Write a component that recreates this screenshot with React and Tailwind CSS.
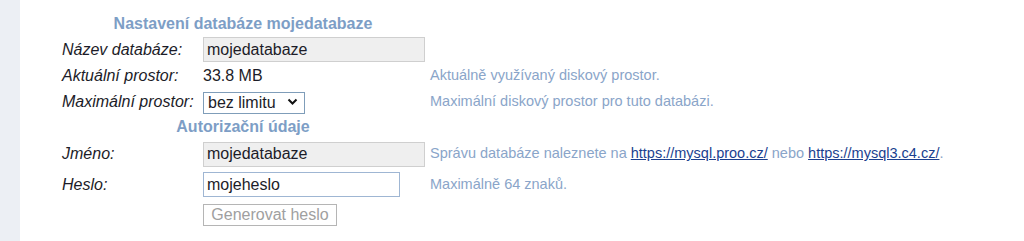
import { useState } from 'react';

function Desc({ children }) {
  return <div className="text-[14.5px] text-[#8aa5c9] whitespace-nowrap">{children}</div>;
}

export default function App() {
  const [heslo, setHeslo] = useState('mojeheslo');
  const [limit, setLimit] = useState('bez');

  return (
    <div
      className="flex w-[1024px] h-[241px] bg-white text-[#1c1c28] overflow-hidden"
      style={{ fontFamily: '"Liberation Sans", Arial, sans-serif' }}
    >
      <div className="w-[20px] shrink-0 bg-[#eceff4]" />
      <div className="pl-[42px] pt-[12px]">
        <div className="grid grid-cols-[141px_227px_1fr] items-center">
          {/* nastaveni */}
          <div className="col-span-2 h-[24px] pr-[6px] flex items-center justify-center font-bold text-[16px] text-[#7d9ec6]">
            Nastavení databáze mojedatabaze
          </div>
          <div />

          <div className="h-[27px] italic text-[16px] flex items-center">Název databáze:</div>
          <div className="h-[27px] flex items-center">
            <input
              readOnly
              value="mojedatabaze"
              className="w-[222px] h-[25px] px-[3px] bg-[#efefef] border border-[#cfcfcf] text-[16px] outline-none"
            />
          </div>
          <div />

          <div className="h-[26px] italic text-[16px] flex items-center">Aktuální prostor:</div>
          <div className="h-[26px] flex items-center text-[16px]">33.8 MB</div>
          <Desc>Aktuálně využívaný diskový prostor.</Desc>

          <div className="h-[26px] italic text-[16px] flex items-center">Maximální prostor:</div>
          <div className="h-[26px] flex items-center">
            <div className="relative w-[102px] h-[22px]">
              <select
                value={limit}
                onChange={(e) => setLimit(e.target.value)}
                className="appearance-none w-full h-full pl-[4px] bg-white border border-[#7f9db9] text-[16px] leading-none outline-none"
              >
                <option value="bez">bez limitu</option>
                <option value="100">100 MB</option>
              </select>
              <svg
                className="absolute right-[7px] top-[7px] pointer-events-none"
                width="11"
                height="8"
                viewBox="0 0 11 8"
              >
                <path d="M1.5 1.5 L5.5 5.5 L9.5 1.5" fill="none" stroke="#111" strokeWidth="2" />
              </svg>
            </div>
          </div>
          <Desc>Maximální diskový prostor pro tuto databázi.</Desc>

          {/* autorizace */}
          <div className="col-span-2 h-[24px] pr-[6px] flex items-center justify-center font-bold text-[16px] text-[#7d9ec6]">
            Autorizační údaje
          </div>
          <div />

          <div className="h-[30px] italic text-[16px] flex items-center">Jméno:</div>
          <div className="h-[30px] flex items-center">
            <input
              readOnly
              value="mojedatabaze"
              className="w-[222px] h-[25px] px-[3px] bg-[#efefef] border border-[#cfcfcf] text-[16px] outline-none"
            />
          </div>
          <Desc>
            Správu databáze naleznete na{' '}
            <a href="#" className="underline text-[#1b3f8f]">https://mysql.proo.cz/</a> nebo{' '}
            <a href="#" className="underline text-[#1b3f8f]">https://mysql3.c4.cz/</a>.
          </Desc>

          <div className="h-[31px] italic text-[16px] flex items-center">Heslo:</div>
          <div className="h-[31px] flex items-center">
            <input
              value={heslo}
              onChange={(e) => setHeslo(e.target.value)}
              className="w-[197px] h-[25px] px-[3px] bg-white border border-[#9fb6d3] text-[16px] outline-none"
            />
          </div>
          <Desc>Maximálně 64 znaků.</Desc>

          <div />
          <div className="h-[30px] flex items-center">
            <button
              disabled
              className="w-[134px] h-[22px] bg-white border border-[#b5b5b5] text-[16px] text-[#a0a0a0] leading-none"
            >
              Generovat heslo
            </button>
          </div>
          <div />
        </div>
      </div>
    </div>
  );
}
